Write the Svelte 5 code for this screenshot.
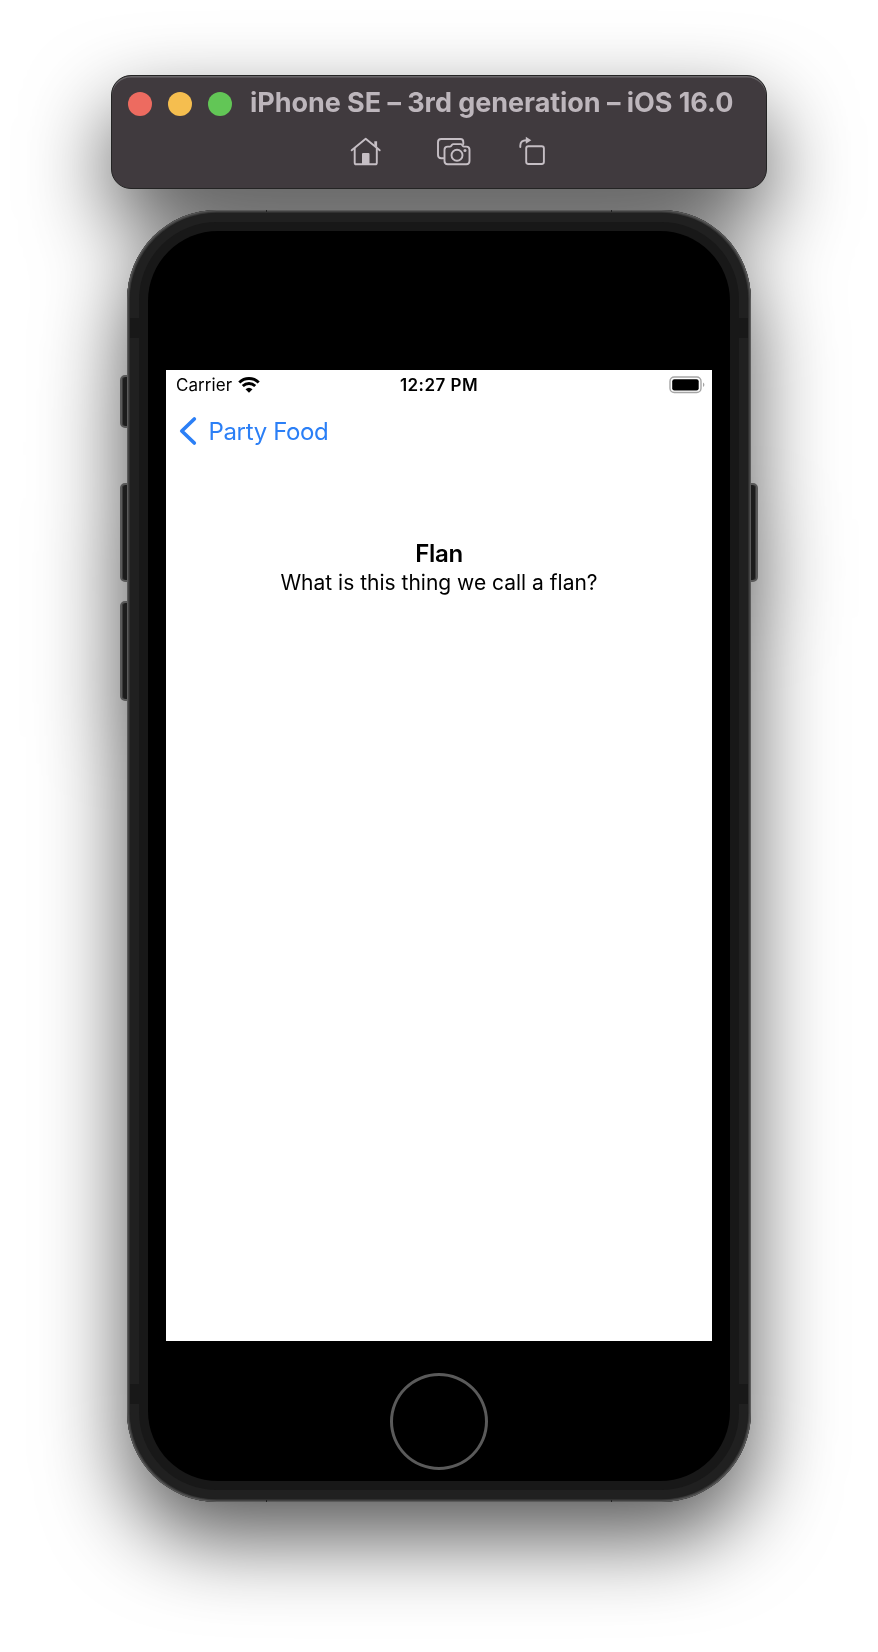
<script>
  const sideKeys = [
    { side: 'left', top: 165, height: 53 },
    { side: 'left', top: 273, height: 99 },
    { side: 'left', top: 391, height: 100 },
    { side: 'right', top: 273, height: 99 }
  ];
  const antennas = [
    { side: 'left', top: 108 },
    { side: 'right', top: 108 },
    { side: 'left', top: 1174 },
    { side: 'right', top: 1174 }
  ];
</script>

<main class="simulator">
  <header class="toolbar">
    <div class="title-row">
      <div class="lights">
        <span class="light close"></span>
        <span class="light minimise"></span>
        <span class="light zoom"></span>
      </div>
      <h1>iPhone SE – 3rd generation – iOS 16.0</h1>
    </div>
    <div class="actions">
      <svg class="home-icon" width="32" height="30" viewBox="0 0 32 30">
        <path d="M1.700 13.300 15.700 1.800l14 11.500" />
        <path d="M4.700 11.500v14.200q0 1.600 1.600 1.600h18.900q1.600 0 1.600-1.600V11.500" />
        <path class="solid" d="M24.300 4.300h2.800v6.200l-2.800-2.200z" />
        <path class="solid" d="M12 27V17.100q0-1 1-1h5.500q1 0 1 1V27z" />
      </svg>
      <svg class="camera-icon" width="34" height="30" viewBox="0 0 34 30">
        <path d="M6.500 21.200H4.200Q1 21.200 1 18V5.200Q1 2 4.200 2h19.300q2.800 0 2.800 3.100V7" />
        <path d="M10.700 9.600h2.200q.8 0 1.300-.7l.6-.9q.6-.9 1.600-.9h7.200q1 0 1.600.9l.6.900q.5.700 1.300.700h2.200q3.200 0 3.200 3.200v11.300q0 3.200-3.200 3.200H10.700q-3.200 0-3.200-3.200V12.800q0-3.200 3.200-3.200z" />
        <circle cx="20" cy="18.200" r="5.500" />
        <circle class="solid" cx="28" cy="13.600" r="1.500" />
      </svg>
      <svg class="rotate-icon" width="28" height="30" viewBox="0 0 28 30">
        <rect x="7.200" y="9.300" width="17.700" height="17.700" rx="2.200" />
        <path d="M1.300 10V8.500Q1.300 3.300 7.500 3.300" />
        <path class="solid" d="M6.800-.2l5.500 3.500-5.500 3.500z" />
      </svg>
    </div>
  </header>

  <section class="phone">
    {#each sideKeys as key}
      <span class="key {key.side}" style="top: {key.top}px; height: {key.height}px"></span>
    {/each}
    <div class="frame">
      <div class="rim">
        <div class="glass">
          <div class="screen">
            <div class="status">
              <div class="carrier">
                <span>Carrier</span>
                <svg width="22" height="16" viewBox="0 0 22 16">
                  <path d="M1.300 5.500Q5.400 1.600 11 1.600t9.700 3.900" />
                  <path d="M4.800 9Q7.500 6.500 11 6.500T17.200 9" />
                  <path class="dot" d="M7.500 12.200Q11 9.200 14.500 12.200L11 15.800z" />
                </svg>
              </div>
              <time>12:27 PM</time>
              <svg class="battery" width="36" height="18" viewBox="0 0 36 18">
                <rect x="1" y="1" width="31" height="15.500" rx="4.200" />
                <rect class="level" x="3.200" y="3.200" width="26.500" height="11.300" rx="2.200" />
                <path d="M34 6.500q1.400.7 1.400 2.200T34 11z" />
              </svg>
            </div>
            <nav>
              <svg width="18" height="28" viewBox="0 0 18 28"><path d="M15.300 2 2.800 14l12.500 12" /></svg>
              <span>Party Food</span>
            </nav>
            <article>
              <h2>Flan</h2>
              <p>What is this thing we call a flan?</p>
            </article>
          </div>
          <div class="home-button"></div>
        </div>
      </div>
    </div>
    {#each antennas as band}
      <span class="antenna {band.side}" style="top: {band.top}px"></span>
    {/each}
    <span class="seam" style="left: 139px; top: 0"></span>
    <span class="seam" style="right: 139px; top: 0"></span>
    <span class="seam" style="left: 139px; bottom: 0"></span>
    <span class="seam" style="right: 139px; bottom: 0"></span>
  </section>
</main>

<style>
  :global(body) { margin: 0; background: #fff; }
  .simulator {
    box-sizing: border-box;
    width: 878px;
    height: 1652px;
    padding-top: 75px;
    display: flex;
    flex-direction: column;
    align-items: center;
    gap: 21px;
    overflow: hidden;
    font-family: Inter, "Liberation Sans", sans-serif;
    filter: drop-shadow(0 36px 42px rgba(0, 0, 0, 0.66));
  }
  h1, h2, p { margin: 0; white-space: nowrap; }
  svg { display: block; fill: none; flex: none; overflow: visible; }

  .toolbar {
    box-sizing: border-box;
    width: 656px;
    height: 114px;
    border-radius: 20px;
    background: #403a3e;
    border: 1px solid #242424;
    box-shadow: inset 0 1.500px 0 #6a676a;
  }
  .title-row { display: flex; align-items: center; height: 56px; padding-left: 16px; gap: 18px; }
  .lights { display: flex; gap: 16px; }
  .light { width: 24px; height: 24px; border-radius: 50%; }
  .close { background: #ed6b60; }
  .minimise { background: #f5be4f; }
  .zoom { background: #62c656; }
  h1 { padding-bottom: 2px; color: #bdb6bc; font-size: 27px; font-weight: 700; line-height: 32px; letter-spacing: -0.050px; }
  .actions { display: flex; padding: 5px 0 0 238px; color: #c5bec4; }
  .actions svg { stroke: currentColor; stroke-width: 1.900; stroke-linecap: round; stroke-linejoin: round; }
  .actions .solid { fill: currentColor; stroke: none; }
  .camera-icon { margin-left: 55px; }
  .rotate-icon { margin-left: 48px; }

  .phone { position: relative; width: 624px; height: 1292px; }
  .frame {
    position: relative;
    box-sizing: border-box;
    height: 100%;
    padding: 3px;
    border-radius: 90px;
    background: #202020;
    box-shadow: inset 0 0 0 1px #5a5a5a, inset 0 0 0 2px #424242, inset 0 0 0 3px #303030;
  }
  .rim {
    box-sizing: border-box;
    height: 100%;
    padding: 9px;
    border-radius: 87px;
    border: 9px solid #202020;
    background: #181818;
  }
  .glass {
    box-sizing: border-box;
    height: 100%;
    padding-top: 139px;
    border-radius: 70px;
    background: #000;
    display: flex;
    flex-direction: column;
    align-items: center;
    gap: 32px;
  }
  .key { position: absolute; box-sizing: border-box; width: 12px; background: #1c1c1c; border: 2px solid #5a5a5a; }
  .key.left { left: -7px; border-radius: 5px 0 0 5px; box-shadow: inset 1px 0 #3b3b3b; }
  .key.right { right: -7px; border-radius: 0 5px 5px 0; box-shadow: inset -1px 0 #3b3b3b; }
  .antenna { position: absolute; width: 9px; height: 20px; background: #181818; }
  .antenna.left { left: 3px; }
  .antenna.right { right: 3px; }
  .seam { position: absolute; width: 1px; height: 2px; background: #222; }

  .screen { width: 546px; height: 971px; background: #fff; color: #000; flex: none; }
  .status { display: grid; grid-template-columns: 1fr auto 1fr; align-items: center; height: 30px; padding: 0 7px 0 10px; font-size: 17px; }
  .carrier { display: flex; align-items: center; gap: 6px; letter-spacing: 0.080px; }
  .carrier svg { stroke: #000; stroke-width: 3; }
  .carrier .dot { fill: #000; stroke: none; }
  time { margin: 0 1px 0 -2px; font-weight: 600; letter-spacing: 0.450px; }
  .battery { justify-self: end; stroke: #a5a5a5; stroke-width: 1.400; }
  .battery .level { fill: #000; stroke: none; }
  .battery path { fill: #a5a5a5; stroke: none; }
  nav { display: flex; align-items: center; gap: 12px; height: 62px; padding-left: 12.500px; color: #2b7ff6; font-size: 24px; letter-spacing: -0.350px; }
  nav svg { stroke: currentColor; stroke-width: 3.700; stroke-linecap: round; stroke-linejoin: round; }
  article { padding-top: 77px; text-align: center; }
  h2 { font-size: 24px; line-height: 30px; font-weight: 600; letter-spacing: -0.300px; }
  p { font-size: 21px; line-height: 27px; }
  .home-button { box-sizing: border-box; width: 98px; height: 97px; border: 3px solid #5a5a5a; border-radius: 50%; flex: none; }
</style>
